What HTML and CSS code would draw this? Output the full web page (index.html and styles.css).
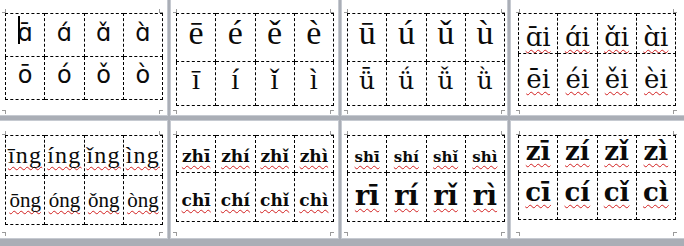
FILE: index.html
```html
<!DOCTYPE html>
<html>
<head>
<meta charset="utf-8">
<link rel="stylesheet" href="styles.css">
</head>
<body>
<div class="desk">
  <section class="page p1">
    <table class="grid">
      <tr class="r1"><td><span class="caret"></span><span class="t">ɑ̄</span></td><td><span class="t">ɑ́</span></td><td><span class="t">ɑ̌</span></td><td><span class="t">ɑ̀</span></td></tr>
      <tr class="r2"><td><span class="t">ō</span></td><td><span class="t">ó</span></td><td><span class="t">ǒ</span></td><td><span class="t">ò</span></td></tr>
    </table>
    <i class="mk tl"></i><i class="mk tr"></i><i class="mk bl"></i><i class="mk br"></i>
  </section>
  <section class="page p2">
    <table class="grid">
      <tr class="r1"><td><span class="t">ē</span></td><td><span class="t">é</span></td><td><span class="t">ě</span></td><td><span class="t">è</span></td></tr>
      <tr class="r2"><td><span class="t">ī</span></td><td><span class="t">í</span></td><td><span class="t">ǐ</span></td><td><span class="t">ì</span></td></tr>
    </table>
    <i class="mk tl"></i><i class="mk tr"></i><i class="mk bl"></i><i class="mk br"></i>
  </section>
  <section class="page p3">
    <table class="grid">
      <tr class="r1"><td><span class="t">ū</span></td><td><span class="t">ú</span></td><td><span class="t">ǔ</span></td><td><span class="t">ù</span></td></tr>
      <tr class="r2"><td><span class="t">ǖ</span></td><td><span class="t">ǘ</span></td><td><span class="t">ǚ</span></td><td><span class="t">ǜ</span></td></tr>
    </table>
    <i class="mk tl"></i><i class="mk tr"></i><i class="mk bl"></i><i class="mk br"></i>
  </section>
  <section class="page p4">
    <table class="grid">
      <tr class="r1"><td><span class="t sp">ɑ̄i</span></td><td><span class="t sp">ɑ́i</span></td><td><span class="t sp">ɑ̌i</span></td><td><span class="t sp">ɑ̀i</span></td></tr>
      <tr class="r2"><td><span class="t sp">ēi</span></td><td><span class="t sp">éi</span></td><td><span class="t sp">ěi</span></td><td><span class="t sp">èi</span></td></tr>
    </table>
    <i class="mk tl"></i><i class="mk tr"></i><i class="mk bl"></i><i class="mk br"></i>
  </section>
  <section class="page p5">
    <table class="grid">
      <tr class="r1"><td><span class="t sp">īng</span></td><td><span class="t sp">íng</span></td><td><span class="t sp">ǐng</span></td><td><span class="t sp">ìng</span></td></tr>
      <tr class="r2"><td><span class="t sp">ōng</span></td><td><span class="t sp">óng</span></td><td><span class="t sp">ǒng</span></td><td><span class="t sp">òng</span></td></tr>
    </table>
    <i class="mk tl"></i><i class="mk tr"></i><i class="mk bl"></i><i class="mk br"></i>
  </section>
  <section class="page p6">
    <table class="grid">
      <tr class="r1"><td><span class="t sp">zhī</span></td><td><span class="t sp">zhí</span></td><td><span class="t sp">zhǐ</span></td><td><span class="t sp">zhì</span></td></tr>
      <tr class="r2"><td><span class="t sp">chī</span></td><td><span class="t sp">chí</span></td><td><span class="t sp">chǐ</span></td><td><span class="t sp">chì</span></td></tr>
    </table>
    <i class="mk tl"></i><i class="mk tr"></i><i class="mk bl"></i><i class="mk br"></i>
  </section>
  <section class="page p7">
    <table class="grid">
      <tr class="r1"><td><span class="t sp">shī</span></td><td><span class="t sp">shí</span></td><td><span class="t sp">shǐ</span></td><td><span class="t sp">shì</span></td></tr>
      <tr class="r2"><td><span class="t sp">rī</span></td><td><span class="t sp">rí</span></td><td><span class="t sp">rǐ</span></td><td><span class="t sp">rì</span></td></tr>
    </table>
    <i class="mk tl"></i><i class="mk tr"></i><i class="mk bl"></i><i class="mk br"></i>
  </section>
  <section class="page p8">
    <table class="grid">
      <tr class="r1"><td><span class="t sp">zī</span></td><td><span class="t sp">zí</span></td><td><span class="t sp">zǐ</span></td><td><span class="t sp">zì</span></td></tr>
      <tr class="r2"><td><span class="t sp">cī</span></td><td><span class="t sp">cí</span></td><td><span class="t sp">cǐ</span></td><td><span class="t sp">cì</span></td></tr>
    </table>
    <i class="mk tl"></i><i class="mk tr"></i><i class="mk bl"></i><i class="mk br"></i>
  </section>
</div>
</body>
</html>
```

FILE: styles.css
```css
html, body {
  margin: 0;
  padding: 0;
}
body {
  width: 684px;
  height: 246px;
  overflow: hidden;
  background: #aaaeb6;
  font-family: "DejaVu Serif", serif;
  color: #0a0a0a;
}
.desk {
  display: grid;
  grid-template-columns: 167px 167px 165px 1fr;
  grid-template-rows: 115px 117px;
  column-gap: 4px;
  row-gap: 6px;
  height: 246px;
  padding-bottom: 8px;
  box-sizing: border-box;
  background: #aaaeb6;
}
.page {
  position: relative;
  background: #fff;
  box-shadow: 0 0 0 1px #c6cad1;
  padding: 13px 0 0 5px;
  box-sizing: border-box;
}
.p5, .p6, .p7, .p8 {
  padding-top: 14px;
}
.p4, .p8 {
  padding-left: 7px;
}
.grid {
  border-collapse: collapse;
  table-layout: fixed;
  width: 158px;
}
.grid td {
  border: 1px dashed #000;
  padding: 0;
  box-sizing: border-box;
  text-align: center;
  vertical-align: bottom;
  line-height: 1;
  white-space: nowrap;
  overflow: visible;
}
.t {
  display: inline-block;
}
.sp {
  text-decoration: underline wavy #d21f1f;
  text-decoration-thickness: 1px;
  text-underline-offset: 3px;
  text-decoration-skip-ink: none;
}
.caret {
  display: inline-block;
  width: 2px;
  height: 28px;
  background: #000;
  margin-right: -2px;
  vertical-align: -3px;
}

/* page 1 */
.p1 .r1 td { height: 43px; padding-bottom: 9px; font: 24px "DejaVu Sans", sans-serif; }
.p1 .r2 td { height: 43px; padding-bottom: 10px; font: 24px "DejaVu Sans", sans-serif; }
/* page 2 */
.p2 .r1 td { height: 44px; padding-bottom: 9px; font: 34px "Liberation Serif", serif; }
.p2 .r2 td { height: 44px; padding-bottom: 9px; font: 29px "Liberation Serif", serif; }
/* page 3 */
.p3 .r1 td { height: 44px; padding-bottom: 9px; font: 34px "Liberation Serif", serif; }
.p3 .r2 td { height: 44px; padding-bottom: 10px; font: 25px "DejaVu Serif", serif; }
/* page 4 */
.p4 .r1 td { height: 40px; padding-bottom: 1px; font: 26px "DejaVu Serif", serif; }
.p4 .r2 td { height: 52px; padding-bottom: 11px; font: 26px "DejaVu Serif", serif; }
/* page 5 */
.p5 .r1 td { height: 40px; padding-bottom: 6px; font: 24px "Liberation Serif", serif; letter-spacing: 1.2px; }
.p5 .r2 td { height: 49px; padding-bottom: 11px; font: 21px "Liberation Serif", serif; }
/* page 6 */
.p6 .r1 td { height: 37px; padding-bottom: 6px; font: bold 17px "DejaVu Serif", serif; }
.p6 .r2 td { height: 49px; padding-bottom: 11px; font: bold 17px "DejaVu Serif", serif; }
/* page 7 */
.p7 .r1 td { height: 37px; padding-bottom: 6px; font: bold 15px "DejaVu Serif", serif; }
.p7 .r2 td { height: 49px; padding-bottom: 10px; font: bold 27px "DejaVu Serif", serif; }
/* page 8 */
.p8 .r1 td { height: 37px; padding-bottom: 6px; font: bold 26px "DejaVu Serif", serif; }
.p8 .r2 td { height: 47px; padding-bottom: 12px; font: bold 26px "DejaVu Serif", serif; }

/* crop marks at text-area corners */
.mk {
  position: absolute;
  width: 4px;
  height: 4px;
  border-color: #9a9a9a;
  border-style: solid;
  border-width: 0;
  box-sizing: border-box;
}
.mk.tl { left: 2px; top: 9px; border-right-width: 1px; border-bottom-width: 1px; }
.mk.tr { left: 159px; top: 9px; border-left-width: 1px; border-bottom-width: 1px; }
.mk.bl { left: 2px; top: 110px; border-right-width: 1px; border-top-width: 1px; }
.mk.br { left: 159px; top: 110px; border-left-width: 1px; border-top-width: 1px; }
.p5 .mk.tl, .p6 .mk.tl, .p7 .mk.tl, .p8 .mk.tl,
.p5 .mk.tr, .p6 .mk.tr, .p7 .mk.tr, .p8 .mk.tr { top: 10px; }
.p5 .mk.bl, .p6 .mk.bl, .p7 .mk.bl, .p8 .mk.bl,
.p5 .mk.br, .p6 .mk.br, .p7 .mk.br, .p8 .mk.br { top: 111px; }
.p4 .mk.tl, .p4 .mk.bl, .p8 .mk.tl, .p8 .mk.bl { left: 5px; }
.p4 .mk.tr, .p4 .mk.br, .p8 .mk.tr, .p8 .mk.br { left: 162px; }
```
